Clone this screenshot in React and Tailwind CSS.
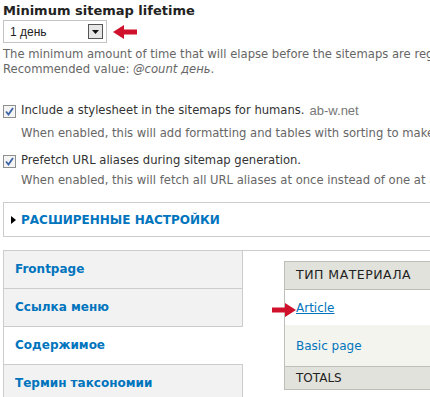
import React from "react";

const RedArrow = ({ className }) => (
    <svg className={className} width="24" height="14" viewBox="0 0 24 14">
        <path d="M0 7 L11 0 L11 4.5 L24 4.5 L24 9.5 L11 9.5 L11 14 Z" fill="#d0112b" />
    </svg>
);

const CheckBox = () => (
    <span className="w-[13px] h-[13px] border border-[#8e8f8f] bg-[#f4f4f4] flex items-center justify-center shrink-0">
        <svg width="9" height="9" viewBox="0 0 9 9">
            <path d="M1 4.5 L3.5 7.5 L8 1" stroke="#3b63a8" strokeWidth="1.8" fill="none" />
        </svg>
    </span>
);

const tabs = ["Frontpage", "Ссылка меню", "Содержимое", "Термин таксономии"];

export default function App() {
    return (
        <div className="w-[430px] h-[397px] overflow-hidden bg-white text-[11.6px] text-[#333] pl-[3px]" style={{ fontFamily: '"DejaVu Sans", Verdana, sans-serif' }}>
            {/* Lifetime */}
            <div className="pt-[2px]">
                <div className="text-[13px] font-bold text-[#222] leading-[17px]">Minimum sitemap lifetime</div>
                <div className="flex items-center gap-[6px] mt-[1px]">
                    <div className="w-[104px] h-[23px] border border-[#c4c4c4] flex items-center justify-between pl-[6px] pr-[3px]">
                        <span className="text-[12px] text-[#222]" style={{ fontFamily: '"Liberation Sans", Arial, sans-serif' }}>1 день</span>
                        <span className="w-[15px] h-[15px] border border-[#555] bg-[#e6e6e6] flex items-center justify-center">
                            <svg width="7" height="4" viewBox="0 0 7 4"><path d="M0 0 L7 0 L3.5 4 Z" fill="#111" /></svg>
                        </span>
                    </div>
                    <RedArrow />
                </div>
                <div className="mt-[4px] text-[#666] leading-[15px] whitespace-nowrap">
                    <div>The minimum amount of time that will elapse before the sitemaps are regenerated.</div>
                    <div>Recommended value: <em>@count день</em>.</div>
                </div>
            </div>

            {/* Checkboxes */}
            <div className="mt-[26px] whitespace-nowrap">
                <div className="flex items-center gap-[5px] h-[16px]">
                    <CheckBox />
                    <span className="text-[#333]">Include a stylesheet in the sitemaps for humans.</span>
                    <span className="text-[#777] text-[13px]" style={{ fontFamily: '"Liberation Sans", Arial, sans-serif' }}>ab-w.net</span>
                </div>
                <div className="pl-[18px] mt-[7px] text-[#666] leading-[15px]">When enabled, this will add formatting and tables with sorting to make it easier to view.</div>
                <div className="flex items-center gap-[5px] h-[16px] mt-[12px]">
                    <CheckBox />
                    <span className="text-[#333]">Prefetch URL aliases during sitemap generation.</span>
                </div>
                <div className="pl-[18px] mt-[4px] text-[#666] leading-[15px]">When enabled, this will fetch all URL aliases at once instead of one at a time.</div>
            </div>

            {/* Advanced fieldset */}
            <div className="mt-[14px] border border-r-0 border-[#ccc] h-[35px] flex items-center pl-[7px] gap-[5px]">
                <svg width="5" height="8" viewBox="0 0 5 8"><path d="M0 0 L5 4 L0 8 Z" fill="#000" /></svg>
                <span className="text-[12px] font-bold text-[#0074bd]">РАСШИРЕННЫЕ НАСТРОЙКИ</span>
            </div>

            {/* Vertical tabs */}
            <div className="mt-[13px] border-t border-[#ccc] flex">
                <div className="w-[240px] shrink-0 border-l border-[#ccc]">
                    {tabs.map((t, i) => (
                        <div
                            key={t}
                            className={
                                "h-[38px] flex items-center pl-[11px] pb-[2px] text-[12px] font-bold text-[#0074bd] border-b border-[#ccc] " +
                                (i === 2 ? "bg-white" : "bg-[#f2f2f2] border-r")
                            }
                        >
                            {t}
                        </div>
                    ))}
                </div>
                <div className="flex-1 pt-[10px] pl-[41px] relative">
                    <div className="border border-r-0 border-[#bebfb9] whitespace-nowrap">
                        <div className="h-[28px] bg-[#e1e2dc] flex items-center pl-[11px] text-[12.5px] tracking-[0.5px] text-[#222] border-b border-[#bebfb9]">ТИП МАТЕРИАЛА</div>
                        <div className="h-[35px] bg-white flex items-center pl-[11px] relative text-[12px]">
                            <span className="text-[#0074bd] underline">Article</span>
                            <RedArrow className="absolute left-[-13px] top-[13px] rotate-180" />
                        </div>
                        <div className="h-[42px] bg-[#f3f4ee] flex items-center pl-[11px] text-[12px] text-[#0074bd] border-b border-[#bebfb9]">Basic page</div>
                        <div className="h-[22px] bg-[#e1e2dc] flex items-center pl-[11px] text-[12px] text-[#222]">TOTALS</div>
                    </div>
                </div>
            </div>
        </div>
    );
}
